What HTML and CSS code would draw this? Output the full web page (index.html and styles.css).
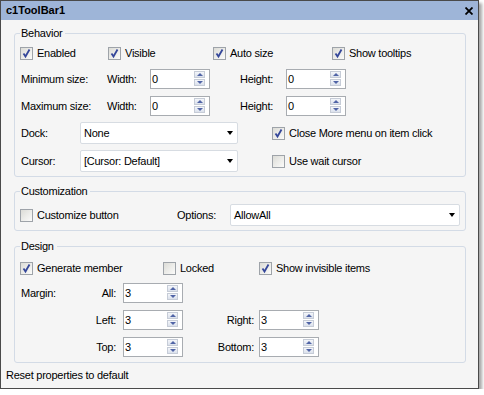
FILE: index.html
```html
<!DOCTYPE html>
<html>
  <head>
    <title>c1ToolBar1</title>
    <link rel="stylesheet" href="styles.css">
  </head>
  <body>
    <div class="window">
      <div class="titlebar">
        <span>c1ToolBar1</span>
        <svg class="close" width="8" height="8" viewBox="0 0 8 8">
          <path d="M0.5 0.5 L7.5 7.5 M7.5 0.5 L0.5 7.5" stroke="#000" stroke-width="1.8" />
        </svg>
      </div>

      <fieldset class="group behavior">
        <legend>Behavior</legend>
        <div class="row checks">
          <label class="cb"><span class="box"><svg width="11" height="11" viewBox="0 0 11 11"><path d="M2.5 5.5 L4.5 8.5 L8.5 1.5" /></svg></span>Enabled</label>
          <label class="cb"><span class="box"><svg width="11" height="11" viewBox="0 0 11 11"><path d="M2.5 5.5 L4.5 8.5 L8.5 1.5" /></svg></span>Visible</label>
          <label class="cb"><span class="box"><svg width="11" height="11" viewBox="0 0 11 11"><path d="M2.5 5.5 L4.5 8.5 L8.5 1.5" /></svg></span>Auto size</label>
          <label class="cb"><span class="box"><svg width="11" height="11" viewBox="0 0 11 11"><path d="M2.5 5.5 L4.5 8.5 L8.5 1.5" /></svg></span>Show tooltips</label>
        </div>

        <div class="row spins first">
          <span class="lbl lbl-size">Minimum size:</span>
          <span class="lbl lbl-w">Width:</span>
          <div class="spin"><span class="val">0</span><span class="arrows"><i class="up"></i><i class="down"></i></span></div>
          <span class="lbl lbl-h">Height:</span>
          <div class="spin"><span class="val">0</span><span class="arrows"><i class="up"></i><i class="down"></i></span></div>
        </div>

        <div class="row spins">
          <span class="lbl lbl-size">Maximum size:</span>
          <span class="lbl lbl-w">Width:</span>
          <div class="spin"><span class="val">0</span><span class="arrows"><i class="up"></i><i class="down"></i></span></div>
          <span class="lbl lbl-h">Height:</span>
          <div class="spin"><span class="val">0</span><span class="arrows"><i class="up"></i><i class="down"></i></span></div>
        </div>

        <div class="row combos">
          <span class="lbl lbl-dock">Dock:</span>
          <div class="combo"><span>None</span><i class="caret"></i></div>
          <label class="cb side"><span class="box"><svg width="11" height="11" viewBox="0 0 11 11"><path d="M2.5 5.5 L4.5 8.5 L8.5 1.5" /></svg></span>Close More menu on item click</label>
        </div>

        <div class="row combos">
          <span class="lbl lbl-dock">Cursor:</span>
          <div class="combo"><span>[Cursor: Default]</span><i class="caret"></i></div>
          <label class="cb side"><span class="box"></span>Use wait cursor</label>
        </div>
      </fieldset>

      <fieldset class="group custom">
        <legend>Customization</legend>
        <div class="row">
          <label class="cb"><span class="box"></span>Customize button</label>
          <span class="lbl lbl-opt">Options:</span>
          <div class="combo wide"><span>AllowAll</span><i class="caret"></i></div>
        </div>
      </fieldset>

      <fieldset class="group design">
        <legend>Design</legend>
        <div class="row checks">
          <label class="cb"><span class="box"><svg width="11" height="11" viewBox="0 0 11 11"><path d="M2.5 5.5 L4.5 8.5 L8.5 1.5" /></svg></span>Generate member</label>
          <label class="cb"><span class="box"></span>Locked</label>
          <label class="cb"><span class="box"><svg width="11" height="11" viewBox="0 0 11 11"><path d="M2.5 5.5 L4.5 8.5 L8.5 1.5" /></svg></span>Show invisible items</label>
        </div>

        <div class="row margins first">
          <span class="lbl m-lbl">Margin:</span>
          <span class="lbl m-sub">All:</span>
          <div class="spin"><span class="val">3</span><span class="arrows"><i class="up"></i><i class="down"></i></span></div>
        </div>

        <div class="row margins">
          <span class="lbl m-lbl"></span>
          <span class="lbl m-sub">Left:</span>
          <div class="spin"><span class="val">3</span><span class="arrows"><i class="up"></i><i class="down"></i></span></div>
          <span class="lbl m-sub2">Right:</span>
          <div class="spin"><span class="val">3</span><span class="arrows"><i class="up"></i><i class="down"></i></span></div>
        </div>

        <div class="row margins last">
          <span class="lbl m-lbl"></span>
          <span class="lbl m-sub">Top:</span>
          <div class="spin"><span class="val">3</span><span class="arrows"><i class="up"></i><i class="down"></i></span></div>
          <span class="lbl m-sub2">Bottom:</span>
          <div class="spin"><span class="val">3</span><span class="arrows"><i class="up"></i><i class="down"></i></span></div>
        </div>
      </fieldset>

      <div class="status">Reset properties to default</div>
    </div>
  </body>
</html>
```

FILE: styles.css
```css
body {
  margin: 0;
  background: #fff;
  font-family: "Liberation Sans", Arial, sans-serif;
  font-size: 11px;
  line-height: 13px;
  letter-spacing: -0.25px;
  color: #000;
}

.window {
  width: 479px;
  height: 389px;
  box-sizing: border-box;
  border: 1px solid #4a4a4a;
  background: #f5f5f5;
  box-shadow: 3px 3px 3px rgba(0, 0, 0, 0.35);
  display: flex;
  flex-direction: column;
}

.titlebar {
  height: 19px;
  flex-shrink: 0;
  background: #9eb5d8;
  display: flex;
  align-items: center;
  justify-content: space-between;
  padding: 0 5px 0 5px;
  font-weight: bold;
  letter-spacing: 0;
}

.close {
  margin-top: 1px;
}

.group {
  margin: 7px 12px 0 13px;
  padding: 6px 0 4px 5px;
  border: 1px solid #d3dbe6;
  border-radius: 3px;
  min-width: 0;
}

.group legend {
  padding: 0 3px 0 1px;
  line-height: 13px;
}

.custom {
  margin-top: 8px;
}

.design {
  margin-top: 9px;
  padding-top: 8px;
  padding-bottom: 5px;
}

.row {
  display: flex;
  align-items: center;
}

.checks {
  height: 14px;
}

.lbl {
  flex-shrink: 0;
  white-space: nowrap;
}

/* checkboxes */
.cb {
  display: flex;
  align-items: center;
  flex-shrink: 0;
  white-space: nowrap;
}

.box {
  width: 13px;
  height: 13px;
  box-sizing: border-box;
  border: 1px solid #9ea3a9;
  background: linear-gradient(135deg, #dcdcd7, #fbfbfa);
  margin-right: 4px;
  display: flex;
}

.box path {
  fill: none;
  stroke: #35479a;
  stroke-width: 1.8;
}

.behavior .checks .cb:nth-child(1) {
  width: 88px;
}
.behavior .checks .cb:nth-child(2) {
  width: 105px;
}
.behavior .checks .cb:nth-child(3) {
  width: 119px;
}

.design .checks .cb:nth-child(1) {
  width: 143px;
}
.design .checks .cb:nth-child(2) {
  width: 96px;
}

/* numeric up/down */
.spin {
  width: 60px;
  height: 20px;
  box-sizing: border-box;
  border: 1px solid #a8acb1;
  background: #fff;
  display: flex;
  flex-shrink: 0;
}

.val {
  flex: 1;
  padding-left: 1px;
  line-height: 18px;
}

.arrows {
  width: 11px;
  margin: 1px 4px 2px 0;
  display: flex;
  flex-direction: column;
  gap: 1px;
}

.arrows i {
  flex: 1;
  border: 1px solid #c6ccd7;
  background: linear-gradient(#f4f6fa, #dbe1ec);
  display: flex;
  align-items: center;
  justify-content: center;
}

.arrows i::after {
  content: "";
  border-left: 3px solid transparent;
  border-right: 3px solid transparent;
}

.arrows .up::after {
  border-bottom: 3px solid #5064a6;
}

.arrows .down::after {
  border-top: 3px solid #5064a6;
}

.spins {
  margin-top: 7px;
}

.spins.first {
  margin-top: 9px;
}

.lbl-size {
  width: 86px;
  padding-left: 1px;
}

.lbl-w {
  width: 43px;
}

.lbl-h {
  width: 46px;
  margin-left: 30px;
}

/* combo boxes */
.combos {
  margin-top: 6px;
}

.combo {
  width: 158px;
  height: 22px;
  box-sizing: border-box;
  border: 1px solid #d7dce2;
  border-radius: 2px;
  background: #fff;
  display: flex;
  align-items: center;
  justify-content: space-between;
  padding: 0 4px 0 3px;
  flex-shrink: 0;
}

.combo.wide {
  width: 230px;
}

.caret {
  border-left: 3px solid transparent;
  border-right: 3px solid transparent;
  border-top: 4px solid #000;
}

.lbl-dock {
  width: 59px;
  padding-left: 1px;
}

.cb.side {
  margin-left: 34px;
}

.custom .cb {
  width: 157px;
}

.lbl-opt {
  width: 53px;
}

/* margins */
.margins {
  margin-top: 7px;
}

.margins.first {
  margin-top: 8px;
}

.m-lbl {
  width: 59px;
  padding-left: 1px;
}

.m-sub {
  width: 36px;
  margin-right: 7px;
  text-align: right;
}

.m-sub2 {
  width: 71px;
  margin-right: 5px;
  text-align: right;
}

.status {
  margin: 6px 0 0 5px;
}
```
